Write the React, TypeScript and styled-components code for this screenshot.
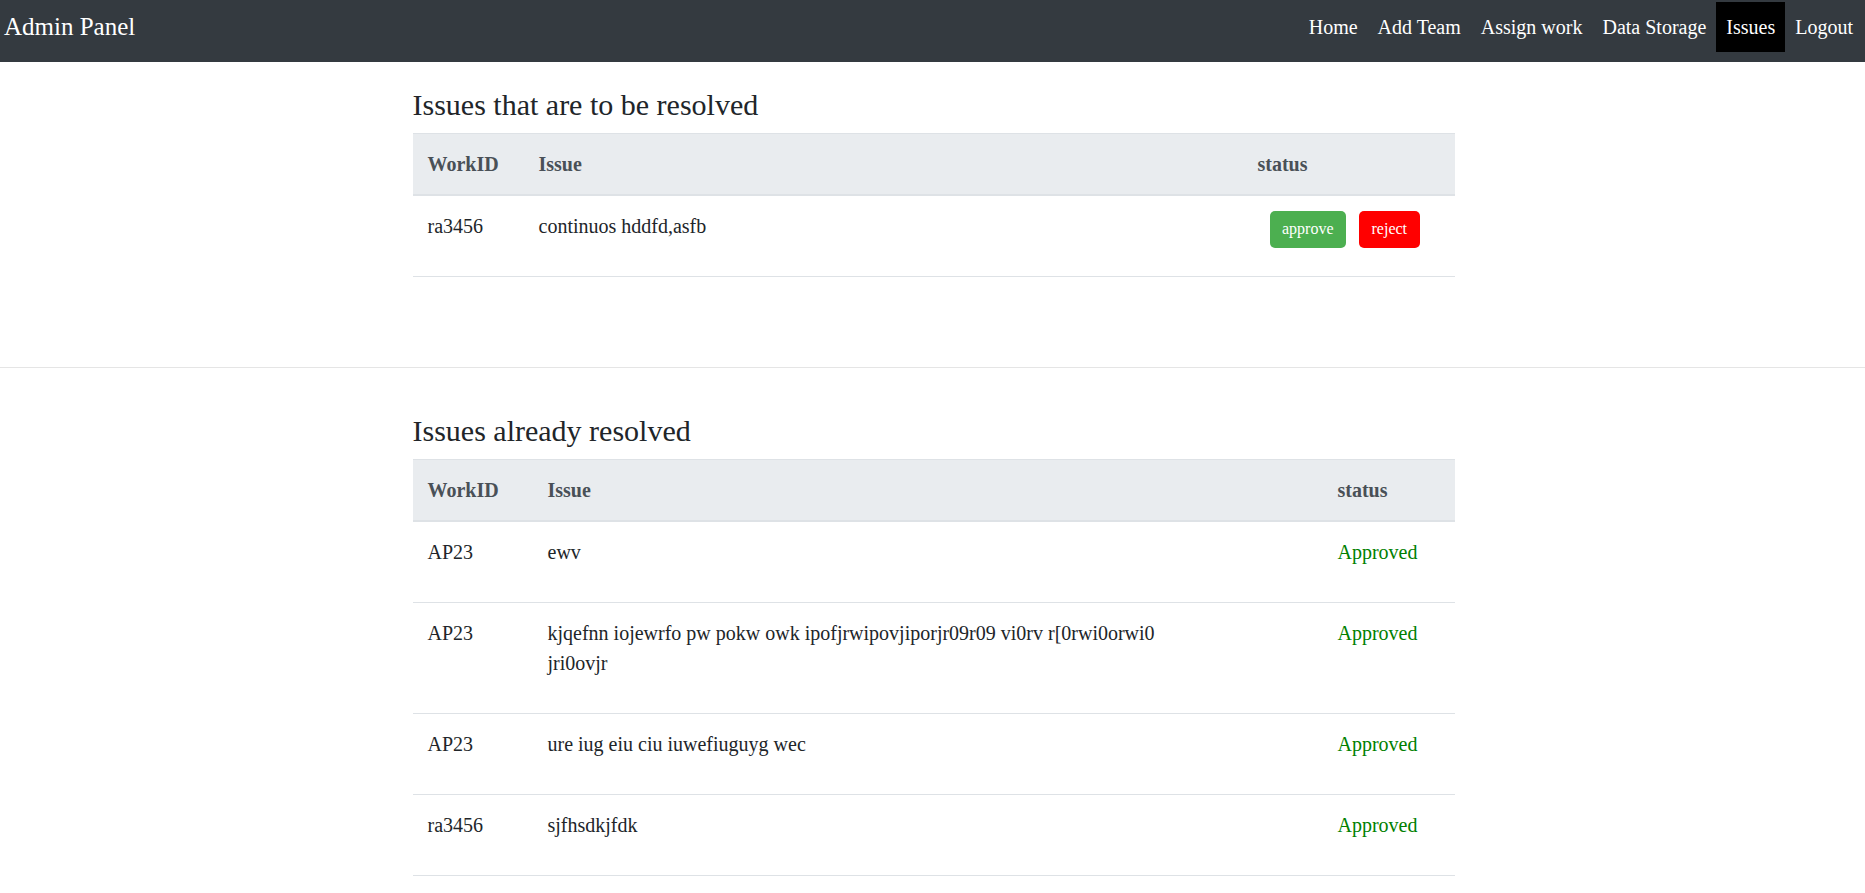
import React from "react";
import styled, { createGlobalStyle } from "styled-components";

const GlobalStyle = createGlobalStyle`
  html { font-size: 20px; }
  * { box-sizing: border-box; }
  body {
    margin: 0;
    font-family: "Liberation Serif", "Times New Roman", serif;
    font-size: 20px;
    line-height: 1.5;
    color: #212529;
    background: #fff;
  }
`;

const Navbar = styled.nav`
  display: flex;
  justify-content: space-between;
  align-items: flex-start;
  height: 62px;
  background: #343a40;
  padding: 0 2px 0 4px;
`;

const Brand = styled.a`
  font-size: 25px;
  line-height: 37.5px;
  padding-top: 8px;
  color: #fff;
  text-decoration: none;
`;

const NavList = styled.ul`
  display: flex;
  list-style: none;
  margin: 0;
  padding: 2px 0 0;
`;

const NavLink = styled.a<{ $active?: boolean }>`
  display: block;
  height: 50px;
  line-height: 50px;
  padding: 0 10px;
  font-size: 20px;
  color: #fff;
  text-decoration: none;
  background: ${(p) => (p.$active ? "#000" : "transparent")};
`;

const Section = styled.section<{ $bottom: number }>`
  width: 1042px;
  margin-left: calc(50% - 520px);
  padding: 25px 0 ${(p) => p.$bottom}px;
`;

const Heading = styled.h3`
  font-size: 30px;
  font-weight: normal;
  line-height: 36px;
  margin: 0 0 10px;
  color: #212529;
`;

const Table = styled.table`
  width: 100%;
  border-collapse: collapse;
  table-layout: fixed;
  margin-bottom: 20px;
`;

const Col = styled.col<{ $w: number }>`
  width: ${(p) => p.$w}px;
`;

const Th = styled.th`
  text-align: left;
  padding: 15px;
  line-height: 30px;
  background: #e9ecef;
  color: #495057;
  font-weight: bold;
  border-top: 1px solid #dee2e6;
  border-bottom: 2px solid #dee2e6;
`;

const Td = styled.td`
  padding: 15px;
  vertical-align: top;
  border-bottom: 1px solid #dee2e6;
`;

const CellText = styled.p<{ $approved?: boolean }>`
  margin: 0 0 20px;
  line-height: 30px;
  max-width: 640px;
  color: ${(p) => (p.$approved ? "#008000" : "#212529")};
`;

const Actions = styled.div`
  display: flex;
  gap: 13px;
  padding-left: 12px;
`;

const ActionButton = styled.button<{ $kind: "approve" | "reject" }>`
  font-family: inherit;
  font-size: 16px;
  line-height: 20.8px;
  padding: 8px 12.5px;
  border: none;
  border-radius: 5px;
  color: #fff;
  cursor: pointer;
  background: ${(p) => (p.$kind === "approve" ? "#4caf50" : "#ff0000")};
`;

const Divider = styled.hr`
  margin: 20px 0;
  border: 0;
  border-top: 1px solid rgba(0, 0, 0, 0.1);
`;

const navItems = ["Home", "Add Team", "Assign work", "Data Storage", "Issues", "Logout"];

const resolved = [
  { id: "AP23", issue: "ewv" },
  {
    id: "AP23",
    issue: "kjqefnn iojewrfo pw pokw owk ipofjrwipovjiporjr09r09 vi0rv r[0rwi0orwi0 jri0ovjr",
  },
  { id: "AP23", issue: "ure iug eiu ciu iuwefiuguyg wec" },
  { id: "ra3456", issue: "sjfhsdkjfdk" },
];

export default function App() {
  return (
    <>
      <GlobalStyle />
      <Navbar>
        <Brand href="#">Admin Panel</Brand>
        <NavList>
          {navItems.map((item) => (
            <li key={item}>
              <NavLink href="#" $active={item === "Issues"}>
                {item}
              </NavLink>
            </li>
          ))}
        </NavList>
      </Navbar>

      <Section $bottom={50}>
        <Heading>Issues that are to be resolved</Heading>
        <Table>
          <colgroup>
            <Col $w={111} />
            <Col $w={719} />
            <Col $w={212} />
          </colgroup>
          <thead>
            <tr>
              <Th>WorkID</Th>
              <Th>Issue</Th>
              <Th>status</Th>
            </tr>
          </thead>
          <tbody>
            <tr>
              <Td>
                <CellText>ra3456</CellText>
              </Td>
              <Td>
                <CellText>continuos hddfd,asfb</CellText>
              </Td>
              <Td>
                <Actions>
                  <ActionButton $kind="approve">approve</ActionButton>
                  <ActionButton $kind="reject">reject</ActionButton>
                </Actions>
              </Td>
            </tr>
          </tbody>
        </Table>
      </Section>

      <Divider />

      <Section $bottom={0}>
        <Heading>Issues already resolved</Heading>
        <Table>
          <colgroup>
            <Col $w={120} />
            <Col $w={790} />
            <Col $w={132} />
          </colgroup>
          <thead>
            <tr>
              <Th>WorkID</Th>
              <Th>Issue</Th>
              <Th>status</Th>
            </tr>
          </thead>
          <tbody>
            {resolved.map((r, i) => (
              <tr key={i}>
                <Td>
                  <CellText>{r.id}</CellText>
                </Td>
                <Td>
                  <CellText>{r.issue}</CellText>
                </Td>
                <Td>
                  <CellText $approved>Approved</CellText>
                </Td>
              </tr>
            ))}
          </tbody>
        </Table>
      </Section>
    </>
  );
}
